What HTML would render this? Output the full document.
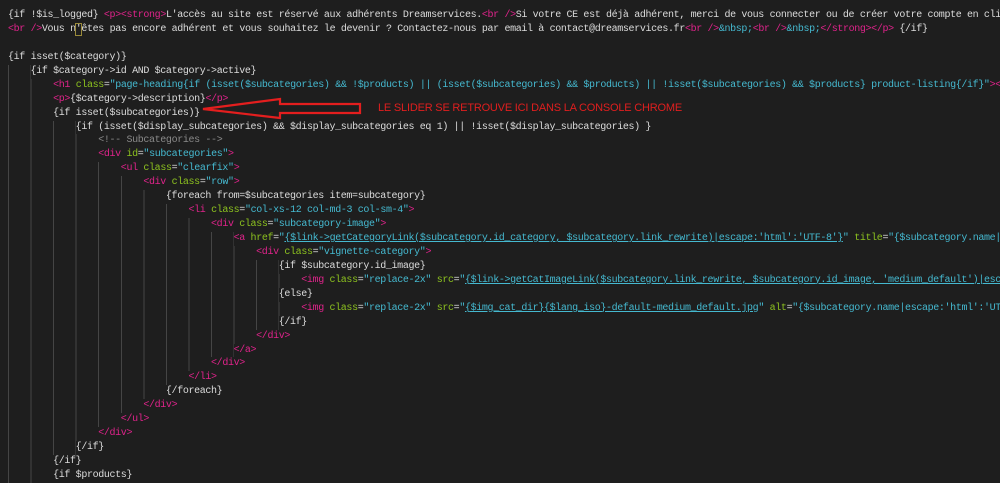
<!DOCTYPE html>
<html><head><meta charset="utf-8"><style>
html,body{margin:0;padding:0;background:#1e1e1e;width:1000px;height:478px;overflow:hidden}
#c{position:absolute;left:8px;top:9px;width:992px;overflow:hidden;font-family:"Liberation Mono",monospace;font-size:10px;letter-spacing:-0.36px;line-height:13.95px;color:#dcdcdc}
.l{height:13.95px;display:block;white-space:pre;overflow:hidden}
.g{display:inline-block;height:13.95px;vertical-align:top;background:repeating-linear-gradient(to right,#454545 0 1px,transparent 1px 22.56px)}
.t{color:#e0238b}.a{color:#8dc21f}.s{color:#45b9d0}.m{color:#8a8a8a}
.u{text-decoration:underline;text-decoration-color:#45b9d0}
.cur{outline:1px solid #9a8a3a}
#note{position:absolute;left:378px;top:102px;font-family:"Liberation Sans",sans-serif;font-size:11px;color:#e01e1e;white-space:pre;letter-spacing:-0.2px}
</style></head><body>
<div id="c">
<div class="l">{if !$is_logged} <span class="t">&lt;p&gt;&lt;strong&gt;</span>L'accès au site est réservé aux adhérents Dreamservices.<span class="t">&lt;br /&gt;</span>Si votre CE est déjà adhérent, merci de vous connecter ou de créer votre compte en cli</div>
<div class="l"><span class="t">&lt;br /&gt;</span>Vous n<span class="cur">'</span>êtes pas encore adhérent et vous souhaitez le devenir ? Contactez-nous par email à contact@dreamservices.fr<span class="t">&lt;br /&gt;</span><span class="s">&amp;nbsp;</span><span class="t">&lt;br /&gt;</span><span class="s">&amp;nbsp;</span><span class="t">&lt;/strong&gt;&lt;/p&gt;</span> {/if}</div>
<div class="l"> </div>
<div class="l">{if isset($category)}</div>
<div class="l"><span class="g" style="width:22.56px"></span>{if $category-&gt;id AND $category-&gt;active}</div>
<div class="l"><span class="g" style="width:45.12px"></span><span class="t">&lt;h1</span> <span class="a">class</span>=<span class="s">"page-heading{if (isset($subcategories) &amp;&amp; !$products) || (isset($subcategories) &amp;&amp; $products) || !isset($subcategories) &amp;&amp; $products} product-listing{/if}"</span><span class="t">&gt;&lt;</span></div>
<div class="l"><span class="g" style="width:45.12px"></span><span class="t">&lt;p&gt;</span>{$category-&gt;description}<span class="t">&lt;/p&gt;</span></div>
<div class="l"><span class="g" style="width:45.12px"></span>{if isset($subcategories)}</div>
<div class="l"><span class="g" style="width:67.68px"></span>{if (isset($display_subcategories) &amp;&amp; $display_subcategories eq 1) || !isset($display_subcategories) }</div>
<div class="l"><span class="g" style="width:90.24px"></span><span class="m">&lt;!-- Subcategories --&gt;</span></div>
<div class="l"><span class="g" style="width:90.24px"></span><span class="t">&lt;div</span> <span class="a">id</span>=<span class="s">"subcategories"</span><span class="t">&gt;</span></div>
<div class="l"><span class="g" style="width:112.8px"></span><span class="t">&lt;ul</span> <span class="a">class</span>=<span class="s">"clearfix"</span><span class="t">&gt;</span></div>
<div class="l"><span class="g" style="width:135.36px"></span><span class="t">&lt;div</span> <span class="a">class</span>=<span class="s">"row"</span><span class="t">&gt;</span></div>
<div class="l"><span class="g" style="width:157.92px"></span>{foreach from=$subcategories item=subcategory}</div>
<div class="l"><span class="g" style="width:180.48px"></span><span class="t">&lt;li</span> <span class="a">class</span>=<span class="s">"col-xs-12 col-md-3 col-sm-4"</span><span class="t">&gt;</span></div>
<div class="l"><span class="g" style="width:203.04px"></span><span class="t">&lt;div</span> <span class="a">class</span>=<span class="s">"subcategory-image"</span><span class="t">&gt;</span></div>
<div class="l"><span class="g" style="width:225.6px"></span><span class="t">&lt;a</span> <span class="a">href</span>=<span class="s">"<span class="u">{$link-&gt;getCategoryLink($subcategory.id_category, $subcategory.link_rewrite)|escape:'html':'UTF-8'}</span>"</span> <span class="a">title</span>=<span class="s">"{$subcategory.name|escape:'html':'UTF-8'}"</span></div>
<div class="l"><span class="g" style="width:248.16px"></span><span class="t">&lt;div</span> <span class="a">class</span>=<span class="s">"vignette-category"</span><span class="t">&gt;</span></div>
<div class="l"><span class="g" style="width:270.72px"></span>{if $subcategory.id_image}</div>
<div class="l"><span class="g" style="width:293.28px"></span><span class="t">&lt;img</span> <span class="a">class</span>=<span class="s">"replace-2x"</span> <span class="a">src</span>=<span class="s">"<span class="u">{$link-&gt;getCatImageLink($subcategory.link_rewrite, $subcategory.id_image, 'medium_default')|escape:'html':'UTF-8'}</span>"</span></div>
<div class="l"><span class="g" style="width:270.72px"></span>{else}</div>
<div class="l"><span class="g" style="width:293.28px"></span><span class="t">&lt;img</span> <span class="a">class</span>=<span class="s">"replace-2x"</span> <span class="a">src</span>=<span class="s">"<span class="u">{$img_cat_dir}{$lang_iso}-default-medium_default.jpg</span>"</span> <span class="a">alt</span>=<span class="s">"{$subcategory.name|escape:'html':'UTF-8'}"</span></div>
<div class="l"><span class="g" style="width:270.72px"></span>{/if}</div>
<div class="l"><span class="g" style="width:248.16px"></span><span class="t">&lt;/div&gt;</span></div>
<div class="l"><span class="g" style="width:225.6px"></span><span class="t">&lt;/a&gt;</span></div>
<div class="l"><span class="g" style="width:203.04px"></span><span class="t">&lt;/div&gt;</span></div>
<div class="l"><span class="g" style="width:180.48px"></span><span class="t">&lt;/li&gt;</span></div>
<div class="l"><span class="g" style="width:157.92px"></span>{/foreach}</div>
<div class="l"><span class="g" style="width:135.36px"></span><span class="t">&lt;/div&gt;</span></div>
<div class="l"><span class="g" style="width:112.8px"></span><span class="t">&lt;/ul&gt;</span></div>
<div class="l"><span class="g" style="width:90.24px"></span><span class="t">&lt;/div&gt;</span></div>
<div class="l"><span class="g" style="width:67.68px"></span>{/if}</div>
<div class="l"><span class="g" style="width:45.12px"></span>{/if}</div>
<div class="l"><span class="g" style="width:45.12px"></span>{if $products}</div>
</div>
<svg style="position:absolute;left:0;top:0" width="1000" height="478">
<polygon points="203,109 280,99 280,104 360,104 360,113 280,113 280,118" fill="none" stroke="#e41e1e" stroke-width="2.2" stroke-linejoin="miter"/>
</svg>
<div id="note">LE SLIDER SE RETROUVE ICI DANS LA CONSOLE CHROME</div>
</body></html>
